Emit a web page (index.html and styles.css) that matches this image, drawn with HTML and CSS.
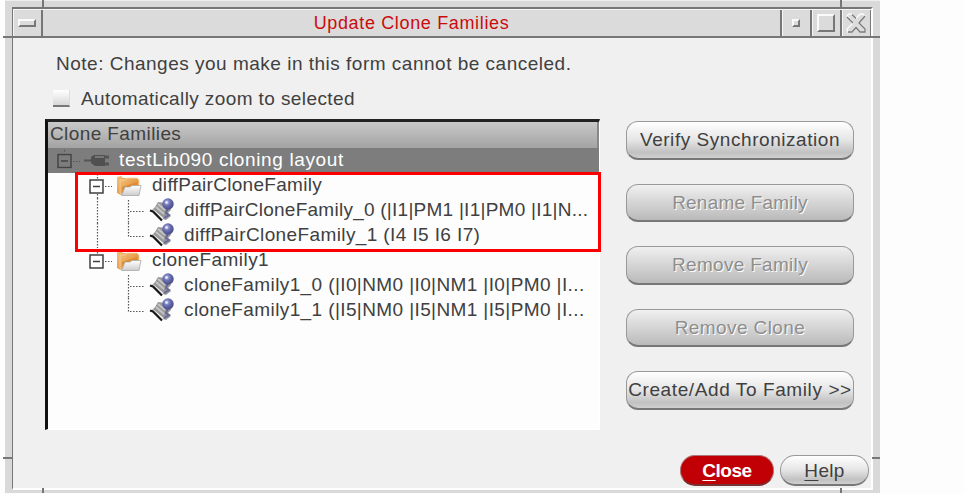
FILE: index.html
```html
<!DOCTYPE html>
<html lang="en">
<head>
<meta charset="utf-8">
<title>Update Clone Families</title>
<link rel="stylesheet" href="styles.css">
</head>
<body>
<svg class="defs" width="0" height="0">
  <defs>
    <linearGradient id="gold" x1="0" y1="0" x2="1" y2="1"><stop offset="0" stop-color="#f6c27c"/><stop offset="1" stop-color="#d67b1e"/></linearGradient>
    <linearGradient id="paper" x1="0" y1="0" x2="0" y2="1"><stop offset="0" stop-color="#fff"/><stop offset="1" stop-color="#ccc"/></linearGradient>
    <radialGradient id="ball" cx=".4" cy=".35" r=".6"><stop offset="0" stop-color="#b9bfe8"/><stop offset=".5" stop-color="#6a70b4"/><stop offset="1" stop-color="#4c5088"/></radialGradient>
    <symbol id="box" viewBox="0 0 15 15"><path d="M1 1H14V14H1ZM4 7.5H11" fill="none" stroke="currentColor" stroke-width="1.5"/></symbol>
    <symbol id="folder" viewBox="0 0 26 22">
      <path d="M1 2L5 1L7 3H14L16 5V8L5 20L1 18Z" fill="url(#gold)"/>
      <path d="M4 5H9L11 3H21L23 5V11L7 20L4 18Z" fill="url(#gold)" stroke="#f9d6a4" stroke-width=".8"/>
      <path d="M6 12L21 7V15L7 20Z" fill="#e08a30"/>
      <path d="M9 12H14L16 10.500H25L23 20.500H5.500Z" fill="url(#paper)" stroke="#aaa" stroke-width=".8"/>
    </symbol>
    <symbol id="stamp" viewBox="0 0 26 24">
      <path d="M6 9L9 4L17 5L20 8L22 12L19 15L22 18L17 22L14 21L3 12Z" fill="#989898"/>
      <path d="M9 6L16 12M7 9L15 16" stroke="#c4c4c4" stroke-width="2"/>
      <path d="M19 10L17 15L20 17L15 20" fill="none" stroke="#66699a" stroke-width="2"/>
      <path d="M4 12L14 20.500" stroke="#f2f2f2" stroke-width="1.500"/>
      <path d="M1 12.500L4 13.500L13 22.500" fill="none" stroke="#171717" stroke-width="2.200"/>
      <circle cx="19" cy="6" r="5.700" fill="url(#ball)"/>
      <circle cx="17.500" cy="4.500" r="1.300" fill="#eef"/>
    </symbol>
  </defs>
</svg>
<main class="window">
  <i class="tick v t1"></i><i class="tick v t2"></i><i class="tick v b1"></i><i class="tick v b2"></i>
  <i class="tick h l1"></i><i class="tick h l2"></i><i class="tick h r1"></i><i class="tick h r2"></i>
  <div class="frame">
    <header class="titlebar">
      <span class="cell menu"><i class="knob dash"></i></span>
      <h1 class="title"><span class="s-title">Update Clone Families</span></h1>
      <span class="cell"><i class="knob dot"></i></span>
      <span class="cell"><i class="knob square"></i></span>
      <span class="cell last"><svg width="22" height="22" viewBox="0 0 22 22"><path d="M2 3.500L4 2H7L11 6.500L15 2H18L20 4L14 11L20 17V20H15L11 15.500L7 20H3L2 17L8 11Z" fill="#dcdcdc" stroke="#fafafa" stroke-width="1.300"/><path d="M2 5L8 11M3 20H7L11 15.500L15 20H20V17L14 11L20 4M7 2.500L11 6.500" fill="none" stroke="#777" stroke-width="1.300"/></svg></span>
    </header>
    <section class="content">
      <p class="note"><span class="s-note">Note: Changes you make in this form cannot be canceled.</span></p>
      <label class="check"><i class="tickbox"></i><span class="s-check">Automatically zoom to selected</span></label>
      <div class="columns">
        <div class="tree">
          <div class="head"><span class="s-head">Clone Families</span></div>
          <div class="row selected">
            <svg width="71" height="25" viewBox="48 0 71 25"><use href="#box" x="57" y="5.500" width="15" height="15"/><path class="dots" d="M64.500 2V5M73 13.500H80"/><path d="M84 12.500H92" stroke="#555" stroke-width="2"/><path d="M91 9L94 7H105V18H95L91 15Z" fill="#505050"/><path d="M95 9H104" stroke="#777" stroke-width="2"/><path d="M105 9H109M105 16H109" stroke="#555" stroke-width="3"/></svg>
            <span class="s0">testLib090 cloning layout</span>
          </div>
          <div class="row">
            <svg width="104" height="25" viewBox="48 0 104 25"><path class="dots" d="M97.500 1V6M97.500 21V25M105 13.500H112"/><use href="#box" x="89" y="6" width="15" height="15"/><use href="#folder" x="116" y="2" width="26" height="22"/></svg>
            <span class="s1">diffPairCloneFamily</span>
          </div>
          <div class="row">
            <svg width="136" height="25" viewBox="48 0 136 25"><path class="dots" d="M97.500 0V25M128.500 2V25M130 13.500H144"/><use href="#stamp" x="149" y="0" width="26" height="24"/></svg>
            <span class="s2">diffPairCloneFamily_0 (|I1|PM1 |I1|PM0 |I1|N...</span>
          </div>
          <div class="row">
            <svg width="136" height="25" viewBox="48 0 136 25"><path class="dots" d="M97.500 0V25M128.500 0V14M130 13.500H144"/><use href="#stamp" x="149" y="0" width="26" height="24"/></svg>
            <span class="s3">diffPairCloneFamily_1 (I4 I5 I6 I7)</span>
          </div>
          <div class="row">
            <svg width="104" height="25" viewBox="48 0 104 25"><path class="dots" d="M97.500 1V6M105 13.500H112"/><use href="#box" x="89" y="6" width="15" height="15"/><use href="#folder" x="116" y="2" width="26" height="22"/></svg>
            <span class="s4">cloneFamily1</span>
          </div>
          <div class="row">
            <svg width="136" height="25" viewBox="48 0 136 25"><path class="dots" d="M128.500 2V25M130 13.500H144"/><use href="#stamp" x="149" y="0" width="26" height="24"/></svg>
            <span class="s5">cloneFamily1_0 (|I0|NM0 |I0|NM1 |I0|PM0 |I...</span>
          </div>
          <div class="row">
            <svg width="136" height="25" viewBox="48 0 136 25"><path class="dots" d="M128.500 0V14M130 13.500H144"/><use href="#stamp" x="149" y="0" width="26" height="24"/></svg>
            <span class="s6">cloneFamily1_1 (|I5|NM0 |I5|NM1 |I5|PM0 |I...</span>
          </div>
          <div class="highlight"></div>
        </div>
        <div class="actions">
          <button class="btn"><span class="b1t">Verify Synchronization</span></button>
          <button class="btn off"><span class="b2t">Rename Family</span></button>
          <button class="btn off"><span class="b3t">Remove Family</span></button>
          <button class="btn off"><span class="b4t">Remove Clone</span></button>
          <button class="btn"><span class="b5t">Create/Add To Family &gt;&gt;</span></button>
        </div>
      </div>
      <footer class="footer">
        <button class="btn close"><span class="b6t"><u>C</u>lose</span></button>
        <button class="btn help"><span class="b7t"><u>H</u>elp</span></button>
      </footer>
    </section>
  </div>
</main>
</body>
</html>
```
FILE: styles.css
```css
* { box-sizing: border-box; }
body { margin: 0; width: 964px; height: 494px; overflow: hidden; background: #fdfdfd; color: #404040; font: 19px/25px "Liberation Sans", Arial, sans-serif; }
.defs { position: absolute; }
.window { position: relative; width: 875px; height: 493px; margin-left: 5px; padding: 6px 7px 3px; background: #d9d9d9; border-top: 1px solid #eee; }
.frame { height: 483px; border-left: 1px solid #777; border-top: 2px solid #777; border-right: 2px solid #fff; border-bottom: 2px solid #fff; background: #f0f0f0; }
.titlebar { display: flex; height: 29px; background: #dbdbdb; border-bottom: 2px solid #777; border-top: 1px solid #f5f5f5; }
.cell { display: flex; flex: none; align-items: center; justify-content: center; width: 30px; border-left: 2px solid #777; box-shadow: inset 1px 0 #f5f5f5; }
.cell svg { flex: none; }
.cell.last { width: 31px; border-right: 1px solid #777; }
.cell.menu { border-left: 0; border-right: 2px solid #777; }
.title { flex: 1; margin: 0; text-align: center; font-size: 18px; font-weight: 400; color: #cb0c0c; line-height: 26px; }
.knob { border: 2px solid; border-color: #fafafa #777 #777 #fafafa; }
.dash { width: 18px; height: 8px; }
.dot { width: 8px; height: 8px; }
.square { width: 18px; height: 18px; }
.tick { position: absolute; background: #777; z-index: 2; }
.v { width: 2px; height: 7px; }
.h { height: 2px; width: 9px; }
.t1 { left: 37px; top: -1px; } .t2 { left: 835px; top: -1px; }
.b1 { left: 37px; top: 487px; height: 5px; } .b2 { left: 835px; top: 487px; height: 5px; }
.l1 { left: -2px; top: 35px; } .l2 { left: -2px; top: 456px; }
.r1 { left: 866px; top: 35px; } .r2 { left: 867px; top: 456px; width: 8px; }
span { white-space: pre; }
.note { margin: 0; padding: 13px 0 0 43px; height: 39px; }
.check { display: flex; align-items: center; padding-left: 40px; margin-top: 9px; height: 25px; }
.tickbox { width: 17px; height: 17px; margin: -1px 11px 0 0; background: linear-gradient(#fff, #d8d8d8); border-bottom: 2px solid #777; border-right: 1px solid #ddd; }
.columns { display: flex; gap: 26px; padding-left: 32px; margin-top: 8px; }
.tree { position: relative; width: 555px; height: 311px; background: #fdfdfd; border: solid; border-width: 3px 1px 1px 3px; border-color: #222 #fff #fff #111; }
.head { height: 26px; padding-left: 2px; background: linear-gradient(#c9c9c9, #a3a3a3); border-right: 2px solid #888; line-height: 24px; }
.row { display: flex; height: 25px; line-height: 24px; color: #404040; }
.row svg { flex: none; }
.selected { background: #7d7d7d; color: #fff; }
.selected svg { color: #444; }
.dots { fill: none; stroke: #555; stroke-width: 1.200; stroke-dasharray: 1.500 1.500; }
.highlight { position: absolute; left: 27px; top: 50px; width: 526px; height: 80px; border: 3px solid #fb0000; }
.actions { display: flex; flex-direction: column; gap: 24px; padding-top: 2px; }
.btn { width: 228px; height: 38.500px; padding: 0; border: 1px solid #999; border-bottom: 2px solid #777; border-radius: 12px; background: linear-gradient(#fff 0, #e5e5e5 50%, #c1c1c1 85%, #d0d0d0); color: #404040; font: inherit; white-space: nowrap; display: flex; justify-content: center; align-items: center; }
.off { background: linear-gradient(#f0f0f0, #d5d5d5 50%, #bababa); color: #8e8e8e; text-shadow: 1px 1px #fff; }
.footer { display: flex; gap: 6px; padding-left: 667px; margin-top: 25px; }
.footer .btn { height: 31px; border-radius: 15px; }
.footer .close { width: 94px; background: #c00004; border-color: #a77; border-bottom-color: #733; color: #fff; font-weight: 700; }
.footer .help { width: 89px; }
u { text-decoration-thickness: 1px; text-underline-offset: 3px; }
.s-title { letter-spacing: 0.65px; }
.s-note { letter-spacing: 0.5px; }
.s-check, .s-head { letter-spacing: 0.4px; }
.row .s0 { letter-spacing: 0.63px; }
.row .s1 { letter-spacing: 0.3px; }
.row .s2 { letter-spacing: 0.25px; }
.row .s3, .row .s5, .row .s6 { letter-spacing: 0.39px; }
.row .s4 { letter-spacing: 0.43px; }
.b1t { letter-spacing: 0.55px; }
.b2t { letter-spacing: 0.2px; }
.b3t, .b7t { letter-spacing: 0.3px; }
.b4t { letter-spacing: 0.4px; }
.b5t { letter-spacing: 0.6px; }
.b6t { letter-spacing: -0.5px; }
```
